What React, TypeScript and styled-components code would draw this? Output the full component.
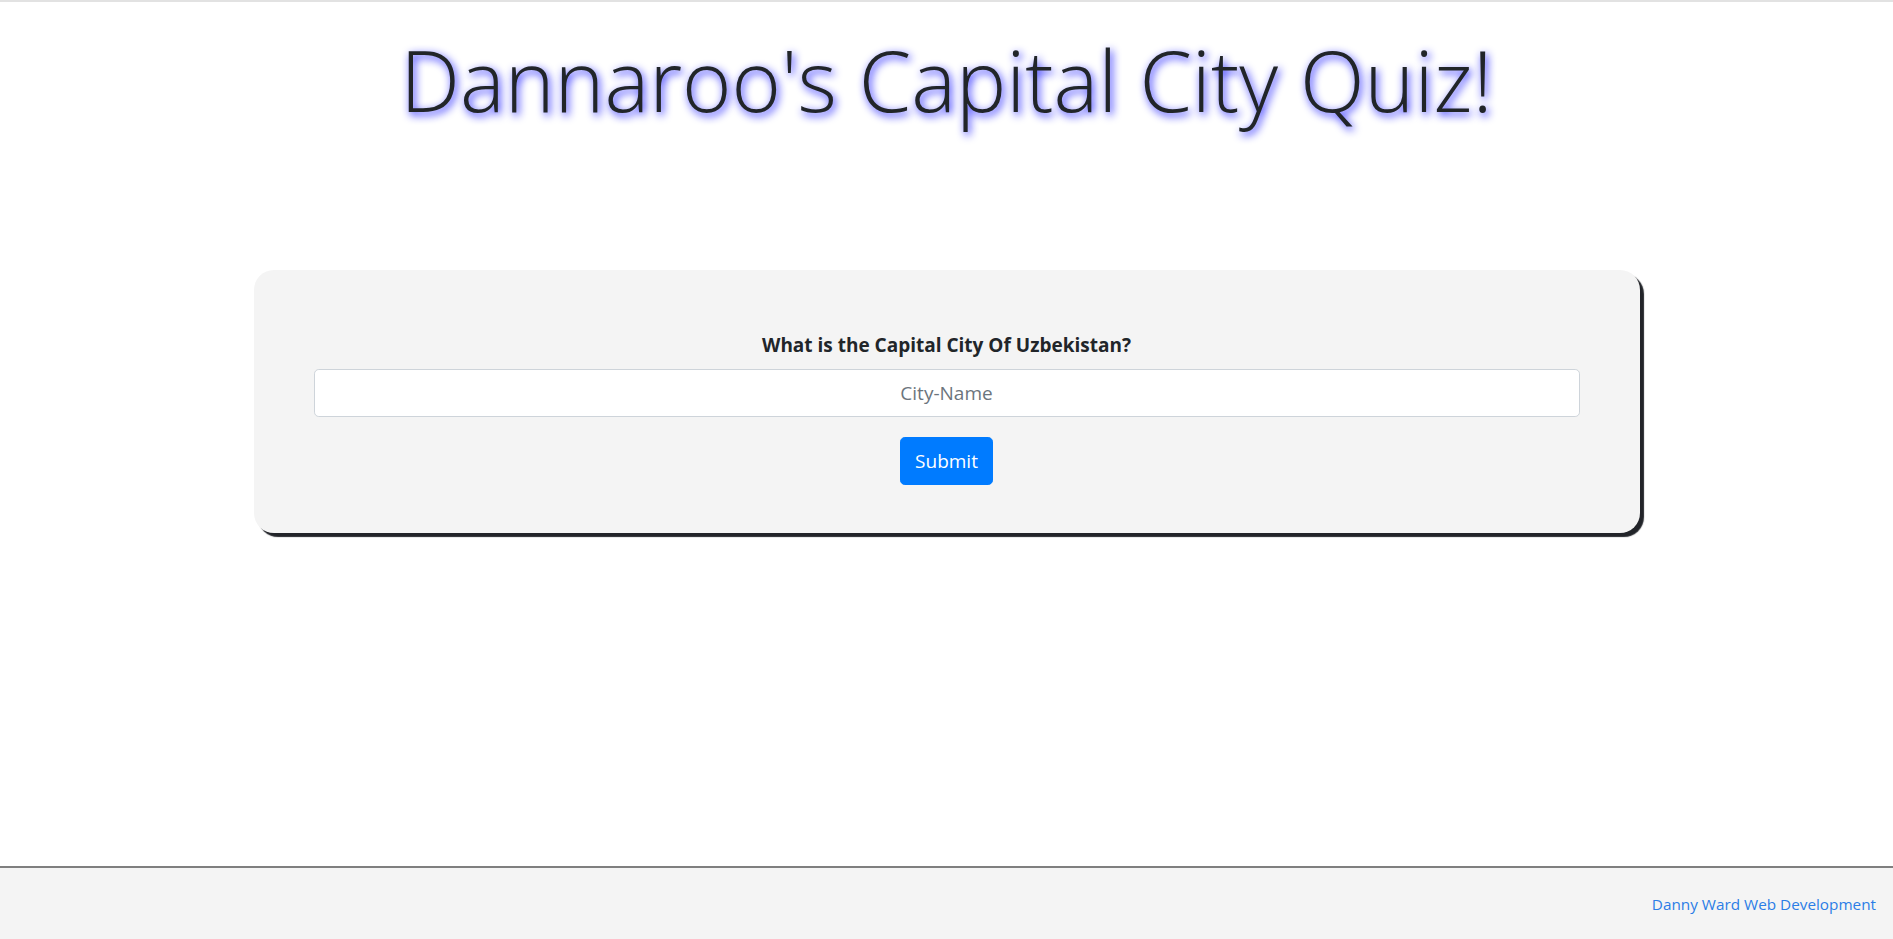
import styled, { createGlobalStyle } from 'styled-components'

const GlobalStyle = createGlobalStyle`
  * {
    box-sizing: border-box;
  }

  body {
    margin: 0;
    background: #fff;
    color: #212529;
    font-family: "Open Sans", "Noto Sans", sans-serif;
  }
`

const Page = styled.div`
  min-height: 100vh;

  display: flex;
  flex-direction: column;

  border-top: 2px solid #e2e2e2;
`

const Title = styled.h1`
  margin: 0;
  padding-top: 27px;

  text-align: center;

  color: #212529;
  font-size: 84.5px;
  font-weight: 300;
  line-height: 1.2;

  text-shadow: 2px 3px 8px rgba(20, 20, 255, 0.95);
`

const Main = styled.main`
  flex: 1;

  display: flex;
  justify-content: center;
  align-items: flex-start;

  padding-top: 140px;
`

const Card = styled.form`
  width: 1386px;

  padding: 63px 60px 48px;

  display: flex;
  flex-direction: column;
  align-items: center;

  background: #f4f4f4;
  border-radius: 20px;

  box-shadow: 4px 4px 1px #222429;
`

const Question = styled.label`
  margin-bottom: 12px;

  font-size: 19px;
  font-weight: 700;
  line-height: 24px;
`

const CityInput = styled.input`
  width: 100%;
  height: 48px;

  padding: 8px 16px;

  text-align: center;
  font-family: inherit;
  font-size: 19px;
  color: #495057;

  background: #fff;
  border: 1px solid #ced4da;
  border-radius: 4.8px;

  &::placeholder {
    color: #6c757d;
  }
`

const SubmitButton = styled.button`
  margin-top: 20px;

  height: 48px;
  padding: 0 14px;

  font-family: inherit;
  font-size: 19px;
  color: #fff;

  background: #007bff;
  border: 1px solid #007bff;
  border-radius: 4.8px;
`

const Footer = styled.footer`
  height: 73px;

  display: flex;
  align-items: center;
  justify-content: flex-end;

  padding-right: 17px;

  background: #f4f4f4;
  border-top: 2px solid #7f7f7f;
`

const FooterLink = styled.a`
  color: #2b7de6;
  font-size: 15.3px;
  text-decoration: none;
`

export default function App() {
  return (
    <>
      <GlobalStyle />
      <Page>
        <Title>Dannaroo's Capital City Quiz!</Title>
        <Main>
          <Card onSubmit={e => e.preventDefault()}>
            <Question htmlFor='city'>What is the Capital City Of Uzbekistan?</Question>
            <CityInput id='city' type='text' placeholder='City-Name' />
            <SubmitButton type='submit'>Submit</SubmitButton>
          </Card>
        </Main>
        <Footer>
          <FooterLink href='#'>Danny Ward Web Development</FooterLink>
        </Footer>
      </Page>
    </>
  )
}
